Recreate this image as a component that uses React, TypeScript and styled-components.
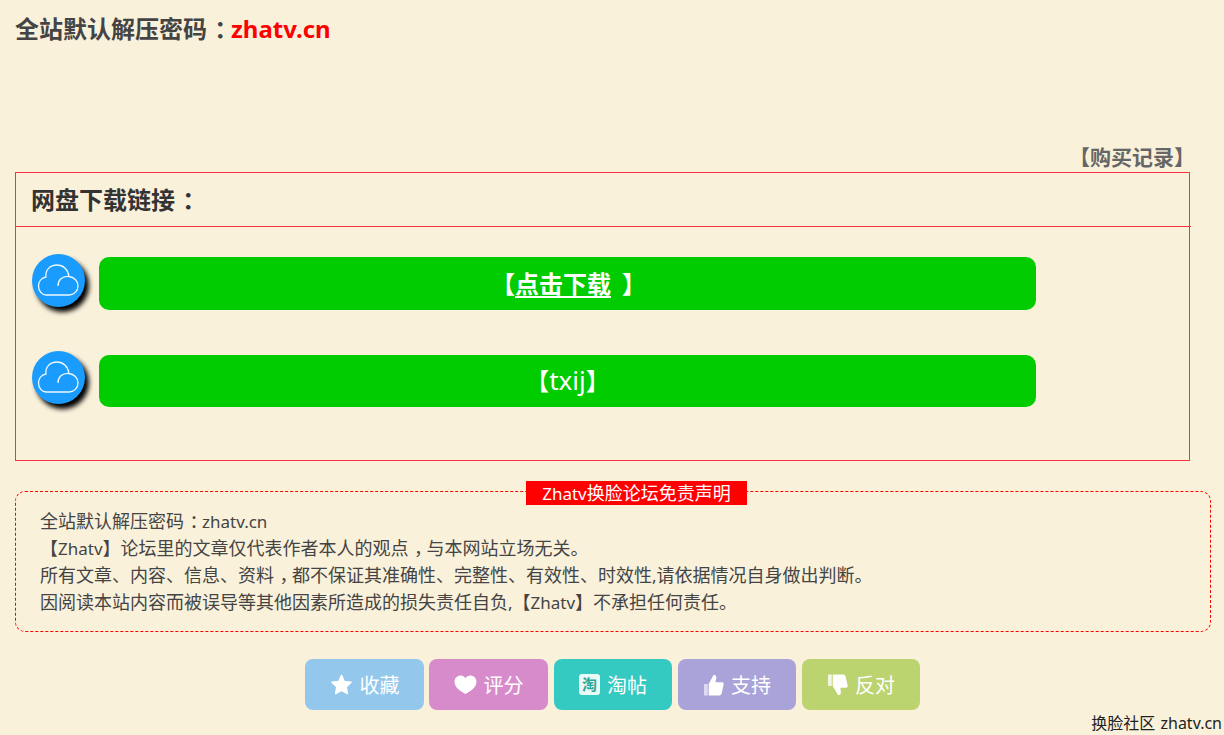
import styled, { createGlobalStyle } from 'styled-components'

const GlobalStyle = createGlobalStyle`
  html, body {
    margin: 0;
    padding: 0;
    background: #faf1db;
  }
  body {
    font-family: 'Noto Sans', 'Noto Sans CJK SC', sans-serif;
    color: #444;
    overflow: hidden;
  }
`

const Page = styled.div`
  width: 1224px;
  height: 735px;
  display: flex;
  flex-direction: column;
  overflow: hidden;
`

// fullwidth colon and comma sit in the middle of their box in the original
const Punct = styled.span`
  padding-left: 0.3em;
  letter-spacing: -0.3em;
`

const Latin = styled.span`
  font-size: 17px;
`

const PasswordTitle = styled.h2`
  margin: 0;
  padding: 12px 15px 0;
  height: 50px;
  line-height: 34px;
  font-size: 24px;
  font-weight: 700;
  color: #444;
  em {
    font-style: normal;
    color: #ff0000;
  }
`

const RecordRow = styled.div`
  margin-top: 81px;
  padding-right: 29px;
  height: 29px;
  line-height: 28px;
  text-align: right;
  font-size: 21px;
  font-weight: 700;
  color: #666;
`

const DownloadBox = styled.section`
  margin-left: 15px;
  width: 1175px;
  height: 289px;
  box-sizing: border-box;
  border: 1px solid #f93440;
`

const BoxHeading = styled.h3`
  margin: 0 -2px 0 0;
  height: 54px;
  box-sizing: border-box;
  padding-left: 15px;
  border-bottom: 1px solid #f93440;
  line-height: 53px;
  font-size: 24px;
  font-weight: 700;
  color: #333;
`

const LinkList = styled.div`
  display: flex;
  flex-direction: column;
  gap: 45px;
  padding: 30px 0 0 16px;
`

const LinkRow = styled.div`
  display: flex;
  align-items: flex-start;
  gap: 14px;
`

const CloudBadge = styled.div<{ $lift: number }>`
  width: 53px;
  height: 53px;
  margin-top: -${p => p.$lift}px;
  flex: none;
  border-radius: 50%;
  background: #1a9cff;
  box-shadow: 4px 5px 5px #000;
`

const DownloadButton = styled.a<{ $tall?: boolean }>`
  width: 937px;
  height: ${p => (p.$tall ? 53 : 52)}px;
  padding: 0 0 3px ${p => (p.$tall ? 2 : 0)}px;
  box-sizing: border-box;
  border-radius: 10px;
  background: #00cc00;
  color: #fff;
  display: flex;
  align-items: center;
  justify-content: center;
  font-size: 24px;
  font-weight: ${p => (p.$tall ? 700 : 400)};
  u {
    margin-right: 11px;
    text-underline-offset: 3px;
  }
  span {
    font-size: 26px;
  }
`

const Disclaimer = styled.section`
  position: relative;
  margin: 30px 0 0 15px;
  width: 1196px;
  height: 141px;
  box-sizing: border-box;
  border: 1px dashed #ff0000;
  border-radius: 10px;
  padding: 16px 24px 0;
  font-size: 18px;
  line-height: 27px;
  color: #444;
`

const Legend = styled.div`
  position: absolute;
  top: -11px;
  left: 510px;
  width: 221px;
  height: 24px;
  background: #ff0000;
  color: #fff;
  font-size: 18px;
  line-height: 25px;
  text-align: center;
`

const ActionBar = styled.div`
  display: flex;
  justify-content: center;
  gap: 6px;
  margin-top: 27px;
  padding-left: 1px;
`

const ActionButton = styled.a<{ $bg: string; $wide?: boolean }>`
  width: ${p => (p.$wide ? 119 : 118)}px;
  height: 51px;
  border-radius: 8px;
  background: ${p => p.$bg};
  color: #fff;
  font-size: 20px;
  display: flex;
  align-items: center;
  justify-content: center;
  gap: 7px;
  &:first-child {
    margin-right: -1px;
  }
`

const TaoIcon = styled.span`
  width: 21px;
  height: 21px;
  border-radius: 3px;
  background: #eafaf6;
  color: #2aa89a;
  font-size: 15px;
  font-weight: 700;
  line-height: 21px;
  text-align: center;
`

const SiteNote = styled.div`
  margin-top: 2px;
  padding-right: 2px;
  text-align: right;
  font-size: 16px;
  line-height: 22px;
  word-spacing: 1px;
  color: #222;
`

function CloudIcon() {
  return (
    <svg width="53" height="53" viewBox="0 0 53 53" fill="none" stroke="#eef8ff" strokeWidth="1.3">
      <path d="M14 41 H37 C42 41 46 37 46 32 C46 27 42 23 37 22.5 C36 15 31 11 25 11 C18 11 13 16 14 23 C9 24 6.5 28 6.5 32 C6.5 37 10 41 14 41 Z" />
      <path d="M26 32 C26 26 30 22 37 22.5" />
    </svg>
  )
}

function StarIcon() {
  return (
    <svg width="23" height="23" viewBox="0 0 24 24" fill="#fff" stroke="#fff" strokeWidth="1.5" strokeLinejoin="round">
      <path d="M12 2.5 L14.9 8.8 L22 9.7 L16.9 14.6 L18.2 21.5 L12 18.1 L5.8 21.5 L7.1 14.6 L2 9.7 L9.1 8.8 Z" />
    </svg>
  )
}

function HeartIcon() {
  return (
    <svg width="23" height="19" viewBox="0 0 24 20" fill="#fff">
      <path d="M12 20 C6 16.5 0.5 13 0.5 7 C0.5 3 3.5 0.5 7 0.5 C9 0.5 11 1.5 12 3.5 C13 1.5 15 0.5 17 0.5 C20.5 0.5 23.5 3 23.5 7 C23.5 13 18 16.5 12 20 Z" />
    </svg>
  )
}

function ThumbUpIcon() {
  return (
    <svg width="21" height="24" viewBox="0 0 22 24" fill="#fff">
      <path d="M1 11 H5 V23 H1 Z" opacity="0.6" />
      <path d="M6 11 L11 1.5 C13 1 14.5 2.5 14 5 L13 9 H20 C21.5 9 22 10.5 21.5 12 L19.5 21 C19 22.5 18 23 17 23 H6 Z" />
    </svg>
  )
}

function ThumbDownIcon() {
  return (
    <svg width="21" height="24" viewBox="0 0 22 24" fill="#fff">
      <path d="M1 1 H5 V13 H1 Z" opacity="0.8" />
      <path d="M6 1 H17 C18 1 19 1.5 19.5 3 L21.5 12 C22 13.5 21.5 15 20 15 H14 L14.5 19 C15 21.5 13 23 11.5 22.5 L6 13 Z" />
    </svg>
  )
}

export default function App() {
  return (
    <>
      <GlobalStyle />
      <Page>
        <PasswordTitle>全站默认解压密码<Punct>：</Punct><em>zhatv.cn</em></PasswordTitle>
        <RecordRow>【购买记录】</RecordRow>
        <DownloadBox>
          <BoxHeading>网盘下载链接<Punct>：</Punct></BoxHeading>
          <LinkList>
            <LinkRow>
              <CloudBadge $lift={3}><CloudIcon /></CloudBadge>
              <DownloadButton $tall>【<u>点击下载</u>】</DownloadButton>
            </LinkRow>
            <LinkRow>
              <CloudBadge $lift={4}><CloudIcon /></CloudBadge>
              <DownloadButton>【<span>txij</span>】</DownloadButton>
            </LinkRow>
          </LinkList>
        </DownloadBox>
        <Disclaimer>
          <Legend><Latin>Zhatv</Latin>换脸论坛免责声明</Legend>
          全站默认解压密码<Punct>：</Punct><Latin>zhatv.cn</Latin><br />
          【<Latin>Zhatv</Latin>】论坛里的文章仅代表作者本人的观点<Punct>，</Punct>与本网站立场无关。<br />
          所有文章、内容、信息、资料<Punct>，</Punct>都不保证其准确性、完整性、有效性、时效性<Latin>,</Latin>请依据情况自身做出判断。<br />
          因阅读本站内容而被误导等其他因素所造成的损失责任自负<Latin>,</Latin>【<Latin>Zhatv</Latin>】不承担任何责任。
        </Disclaimer>
        <ActionBar>
          <ActionButton $bg="#93c8ec" $wide><StarIcon />收藏</ActionButton>
          <ActionButton $bg="#d88bcb" $wide><HeartIcon />评分</ActionButton>
          <ActionButton $bg="#34c9c1"><TaoIcon>淘</TaoIcon>淘帖</ActionButton>
          <ActionButton $bg="#a9a3d9"><ThumbUpIcon />支持</ActionButton>
          <ActionButton $bg="#bbd46f"><ThumbDownIcon />反对</ActionButton>
        </ActionBar>
        <SiteNote>换脸社区 zhatv.cn</SiteNote>
      </Page>
    </>
  )
}
